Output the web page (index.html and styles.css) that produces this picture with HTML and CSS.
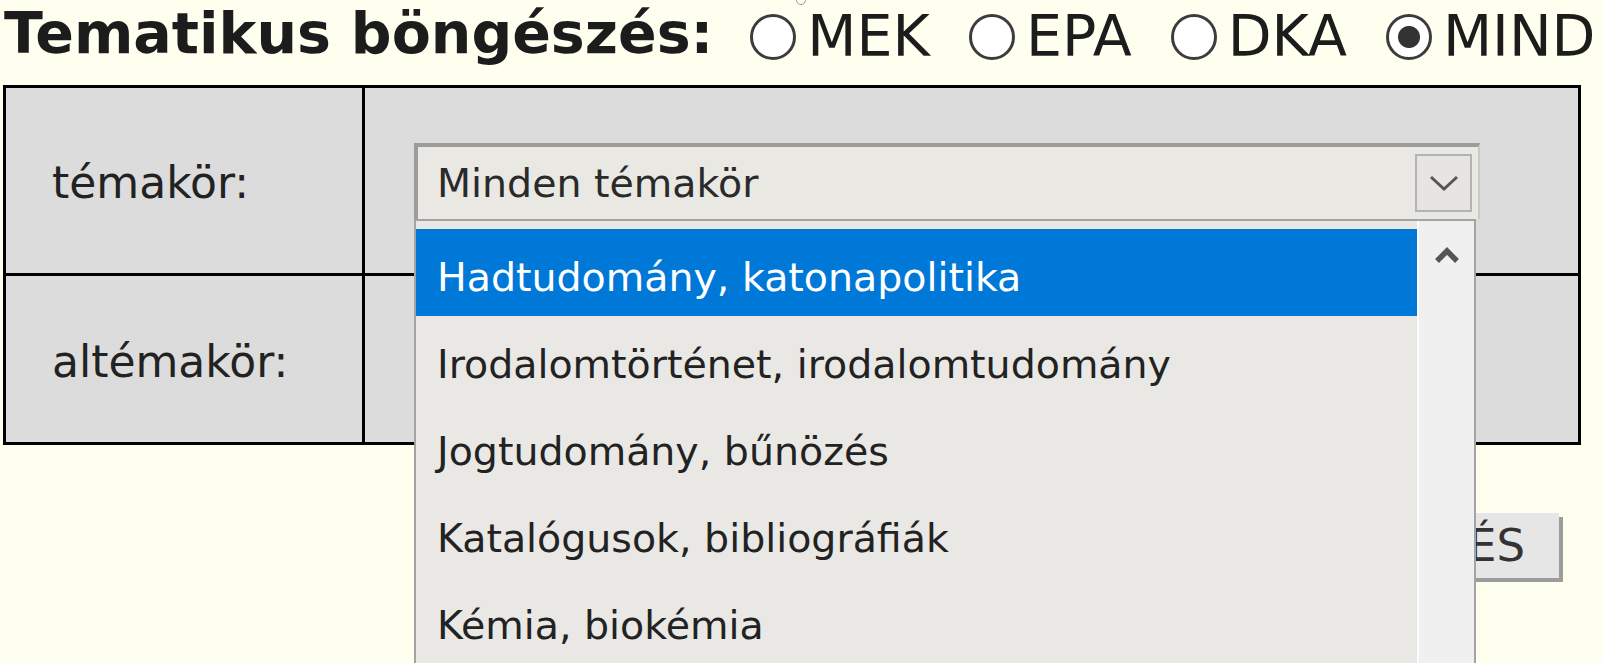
FILE: index.html
```html
<!DOCTYPE html>
<html lang="hu">
<head>
<meta charset="utf-8">
<title>Tematikus böngészés</title>
<link rel="stylesheet" href="styles.css">
</head>
<body>
<span class="ring"></span>
<header class="head">
  <h1 class="title">Tematikus böngészés:</h1>
  <label class="opt"><span class="radio"></span><span class="opt-text">MEK</span></label>
  <label class="opt"><span class="radio"></span><span class="opt-text">EPA</span></label>
  <label class="opt"><span class="radio"></span><span class="opt-text">DKA</span></label>
  <label class="opt"><span class="radio checked"></span><span class="opt-text">MIND</span></label>
</header>

<div class="grid">
  <div class="cell label-cell">témakör:</div>
  <div class="cell field-cell">
    <div class="combo">
      <div class="select">
        <span class="select-text">Minden témakör</span>
        <span class="select-btn">
          <svg width="30" height="18" viewBox="0 0 30 18"><polyline points="2,3 15,15 28,3" fill="none" stroke="#555" stroke-width="3"/></svg>
        </span>
      </div>
      <div class="list">
        <ul class="options">
          <li class="option selected">Hadtudomány, katonapolitika</li>
          <li class="option">Irodalomtörténet, irodalomtudomány</li>
          <li class="option">Jogtudomány, bűnözés</li>
          <li class="option">Katalógusok, bibliográfiák</li>
          <li class="option">Kémia, biokémia</li>
        </ul>
        <div class="scrollbar">
          <svg width="26" height="17" viewBox="0 0 26 17"><polyline points="3,14 13,4 23,14" fill="none" stroke="#555" stroke-width="5.5"/></svg>
        </div>
      </div>
    </div>
  </div>
  <div class="cell label-cell">altémakör:</div>
  <div class="cell field-cell"></div>
</div>

<div class="actions">
  <button class="search" type="button">KERESÉS</button>
</div>
</body>
</html>
```

FILE: styles.css
```css
html, body {
  margin: 0;
  padding: 0;
}
body {
  position: relative;
  background: #fffff0;
  font-family: "DejaVu Sans", Verdana, sans-serif;
  color: #222;
  overflow: hidden;
  height: 663px;
}
.ring {
  position: absolute;
  left: 796px;
  top: -5px;
  width: 8px;
  height: 8px;
  border: 1px solid #999;
  border-radius: 50%;
}
.head {
  display: flex;
  align-items: flex-start;
  height: 85px;
  padding-left: 4px;
  box-sizing: border-box;
}
.title {
  margin: 0;
  font-size: 57px;
  font-weight: bold;
  line-height: 66px;
  color: #1c1c1c;
  white-space: nowrap;
}
.opt {
  display: flex;
  align-items: flex-start;
  margin-left: 37px;
  font-size: 57px;
  line-height: 66px;
  color: #1c1c1c;
}
.opt + .opt {
  margin-left: 39px;
}
.opt-text {
  margin-top: 3px;
}
.radio {
  width: 46px;
  height: 46px;
  box-sizing: border-box;
  margin-top: 14px;
  margin-right: 11px;
  border: 3px solid #3c3c3c;
  border-radius: 50%;
  background: #fff;
}
.radio.checked {
  background: radial-gradient(circle, #333 0 10.5px, #fff 11.5px);
}
.grid {
  display: grid;
  grid-template-columns: 356px 1fr;
  grid-template-rows: 185px 166px;
  gap: 3px;
  width: 1578px;
  margin-left: 3px;
  box-sizing: border-box;
  border: 3px solid #000;
  background: #000;
}
.cell {
  background: #dcdcdc;
}
.label-cell {
  display: flex;
  align-items: center;
  padding: 4px 0 0 46px;
  font-size: 44px;
  color: #222;
}
.field-cell {
  padding: 55px 0 0 49px;
}
.combo {
  position: relative;
  z-index: 5;
  width: 1066px;
}
.select {
  display: flex;
  align-items: center;
  justify-content: space-between;
  height: 76px;
  box-sizing: border-box;
  padding: 0 6px 0 19px;
  border-top: 4px solid #9c9c9c;
  border-left: 4px solid #9c9c9c;
  border-right: 2px solid #c8c8c8;
  background: #e9e8e3;
  font-size: 39.5px;
  color: #2a2a2a;
}
.select-btn {
  display: flex;
  align-items: center;
  justify-content: center;
  width: 57px;
  height: 58px;
  box-sizing: border-box;
  border: 2px solid #b3b3b3;
  background: #e6e5e1;
}
.list {
  position: absolute;
  top: 76px;
  left: 0;
  width: 1062px;
  height: 470px;
  box-sizing: border-box;
  display: flex;
  border: 2px solid #a3a3a3;
  border-bottom: none;
  background: #e9e8e4;
}
.options {
  flex: 1;
  margin: 0;
  padding: 8px 0 0;
  list-style: none;
}
.option {
  height: 87px;
  box-sizing: border-box;
  padding: 10px 0 0 21px;
  line-height: 77px;
  font-size: 39.5px;
  color: #222;
  white-space: nowrap;
}
.option.selected {
  background: #0078d7;
  color: #fff;
}
.scrollbar {
  width: 57px;
  border-left: 2px solid #fbfbfb;
  background: #f0f0f0;
  display: flex;
  justify-content: center;
  align-items: flex-start;
  padding-top: 26px;
  box-sizing: border-box;
}
.actions {
  display: flex;
  justify-content: flex-end;
  padding-right: 43px;
  margin-top: 68px;
}
.search {
  height: 65px;
  padding: 0 34px;
  border: none;
  background: #e6e6e6;
  box-shadow: 4px 4px 0 #9c9c9c;
  font-family: "DejaVu Sans", Verdana, sans-serif;
  font-size: 45px;
  color: #333;
}
```
